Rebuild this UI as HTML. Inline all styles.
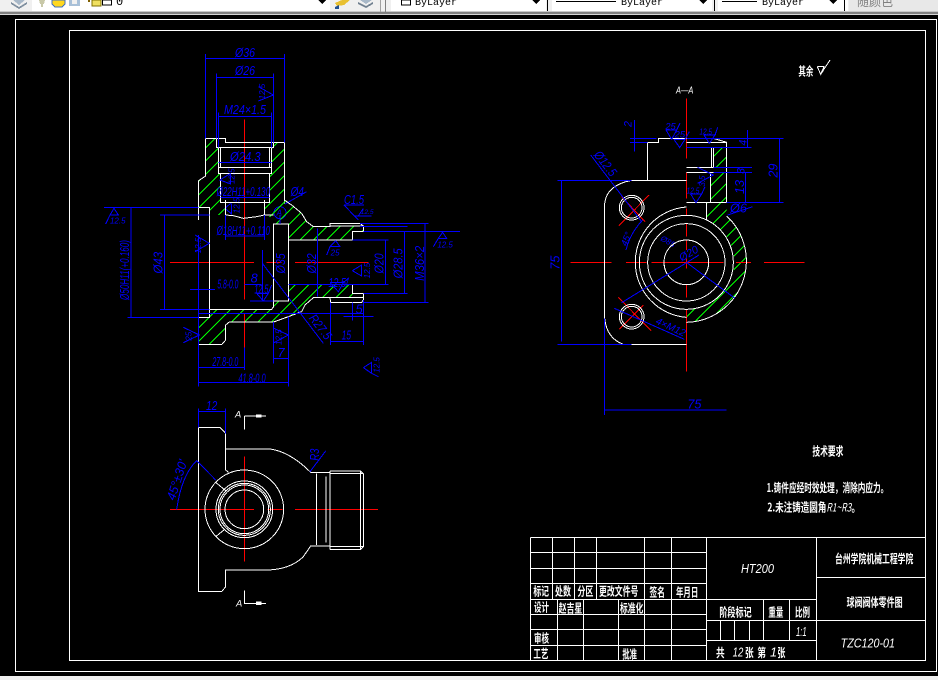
<!DOCTYPE html>
<html><head><meta charset="utf-8"><style>
html,body{margin:0;padding:0;width:938px;height:680px;overflow:hidden;background:#000}
svg{display:block;position:absolute;left:0;top:0}
text{font-family:"Liberation Sans","Noto Sans CJK SC",sans-serif}
.w{fill:none;stroke:#fff;stroke-width:3}
.b{fill:none;stroke:#00f;stroke-width:3}
.r{fill:none;stroke:#f00;stroke-width:3}
.t{fill:#00f;font-style:italic;font-size:38px}
.s{fill:#00f;font-style:italic;font-size:24px}
.c{fill:#fff;font-size:35px;font-family:"Noto Sans CJK SC","WenQuanYi Zen Hei",sans-serif;font-weight:700}
.i{fill:#fff;font-style:italic;font-size:38px}
.h{stroke:#0f0;stroke-width:3;fill:none}
.m{font-family:"Liberation Mono",monospace;font-size:10px;fill:#000}
</style></head><body>
<svg width="938" height="680" viewBox="0 0 938 680" xmlns="http://www.w3.org/2000/svg" shape-rendering="crispEdges">
<defs>
<path id="hh" d="M40 0L0 40M80 0L0 80M120 0L0 120M160 0L0 160M200 0L0 200M240 0L0 240M280 0L0 280M320 0L0 320M360 0L0 360M400 0L0 400M440 0L0 440M480 0L0 480M520 0L0 520M560 0L0 560M600 0L0 600M640 0L0 640M680 0L0 680M720 0L0 720M760 0L0 760M800 0L0 800M840 0L0 840M880 0L0 880M920 0L0 920M960 0L0 960M1000 0L0 1000M1040 0L0 1040M1080 0L0 1080M1120 0L0 1120M1160 0L0 1160M1200 0L0 1200M1240 0L0 1240M1280 0L0 1280M1320 0L0 1320M1360 0L0 1360M1400 0L0 1400M1440 0L0 1440"/>
<clipPath id="k1"><path d="M317 295H349V322H355V400H361V487H377V525H329V502H296V422L317 408Z"/></clipPath>
<clipPath id="k2"><path d="M553 307H520V322H515V400H509V487H493V525L520 535H560V490H553Z"/></clipPath>
<clipPath id="k3"><path d="M553 0L575 15L605 40L620 65L640 80H690V78H790V95H757V120H565V72H521L515 45H493V0Z"/></clipPath>
<clipPath id="k4"><path d="M565 253H757V280H790V293H640L615 315L605 335L565 350L521 366H388L377 375V420L365 434H296V352H329V328H515L521 320V303H565Z"/></clipPath>
<clipPath id="k5"><path d="M490 203H530V262H490ZM482 278H530V368H482ZM469 368H530V408A184 184 0 0 1 409 727V688A141 141 0 0 0 469 418Z"/></clipPath>
</defs>
<rect width="938" height="680" fill="#000"/>
<!-- toolbar -->
<rect width="938" height="11" fill="#f0f0f0"/>
<rect y="11" width="938" height="1" fill="#c8c8c8"/>
<rect y="12" width="938" height="2" fill="#808080"/>
<rect y="14" width="938" height="1" fill="#d8d8d8"/>
<rect x="32" y="0" width="298" height="11" fill="#fff"/>
<path d="M11 2L19 7L27 2L27 4L19 9L11 4Z" fill="#7f8f9f"/><path d="M13 0H25L19 5Z" fill="#a8b8c8"/>
<path d="M39 0H45L44 4H43V7H41V4H40Z" fill="#c8c8a8"/>
<path d="M52 0H65V4L62 7H55L52 4Z" fill="#ffd820" stroke="#4070c0"/>
<rect x="69" y="0" width="11" height="6" fill="#a8c0d8"/><rect x="72" y="0" width="5" height="4" fill="#f0f0f0"/>
<rect x="88" y="0" width="2" height="2" fill="#806000"/><rect x="92" y="0" width="9" height="6" fill="#f0e060" stroke="#807000"/>
<rect x="102.500" y="0" width="9" height="5" fill="#fff" stroke="#000"/>
<text x="116" y="5" class="m" style="font-size:12px">0</text>
<path d="M318 0H326L322 4Z" fill="#000"/>
<path d="M335 3L342 0H350L344 5L337 6Z" fill="#e8c030"/><path d="M335 7L339 5V9H335Z" fill="#205090"/>
<path d="M358 2L366 6L373 2V4L366 8L358 4Z" fill="#708090"/><path d="M360 0H372L366 4Z" fill="#a8b8c8"/>
<rect x="380" y="0" width="1" height="12" fill="#a0a0a0"/><rect x="385" y="0" width="1" height="12" fill="#808080"/>
<rect x="391" y="0" width="155" height="11" fill="#fff"/>
<rect x="401.500" y="0" width="9" height="5" fill="#fff" stroke="#000"/>
<text x="415" y="5" class="m">ByLayer</text><path d="M532 0H540L536 4Z" fill="#000"/>
<rect x="547" y="0" width="1" height="11" fill="#000"/>
<rect x="552" y="0" width="160" height="11" fill="#fff"/>
<rect x="556" y="1" width="60" height="1" fill="#000"/>
<text x="621" y="5" class="m">ByLayer</text><path d="M699 0H707L703 4Z" fill="#000"/>
<rect x="714" y="0" width="1" height="11" fill="#000"/>
<rect x="718" y="0" width="130" height="11" fill="#fff"/>
<rect x="722" y="1" width="35" height="1" fill="#000"/>
<text x="762" y="5" class="m">ByLayer</text><path d="M829 0H837L833 4Z" fill="#000"/>
<rect x="844" y="0" width="1" height="11" fill="#000"/>
<rect x="849" y="0" width="89" height="11" fill="#e8e8e8"/>
<text x="857" y="6" style="font-size:13px;fill:#808080" textLength="36" lengthAdjust="spacingAndGlyphs">随颜色</text>
<!-- bottom strip -->
<rect y="676" width="938" height="4" fill="#f0f0f0"/>
<!-- frames -->
<rect x="15.500" y="19.500" width="921" height="652" fill="none" stroke="#fff"/>
<rect x="69.500" y="30.500" width="856" height="630" fill="none" stroke="#fff"/>

<!-- main section, upper -->
<g transform="translate(100,40) scale(.33333)">
<g clip-path="url(#k1)"><use href="#hh" class="h"/></g>
<g clip-path="url(#k2)"><use href="#hh" class="h"/></g>
<path class="r" d="M433 238V540"/>
<path class="w" d="M296 540V422L317 408V295H377V307H553V490M349 295V322H520V307M355 322V400H515V322M355 382H515M361 322V382M509 322V382M361 400V487H509V400M377 487V540M493 487V525M296 502H329V540"/>
<path class="b" d="M317 42V295M553 42V307M317 55H553M349 100V295M520 100V307M349 112H520M355 218V322M514 218V322M355 229H514M355 367H514M361 473H509M12 502H296M180 525H296M475 140L520 165L475 183M392 400L360 420L392 432V400M392 490L375 505L395 522V490M555 492L620 455M732 495H792M732 495L775 540M765 528H815M775 528L790 505"/>
<circle class="b" cx="540" cy="518" r="18"/>
<text class="t" x="405" y="51" textLength="60" lengthAdjust="spacingAndGlyphs">Ø36</text>
<text class="t" x="405" y="105" textLength="60" lengthAdjust="spacingAndGlyphs">Ø26</text>
<text class="t" x="372" y="222" textLength="126" lengthAdjust="spacingAndGlyphs">M24×1.5</text>
<text class="t" x="390" y="363" textLength="92" lengthAdjust="spacingAndGlyphs">Ø24.3</text>
<text class="t" x="350" y="468" textLength="160" lengthAdjust="spacingAndGlyphs">Ø22H11+0.130</text>
<text class="t" x="572" y="468" textLength="40" lengthAdjust="spacingAndGlyphs">Ø4</text>
<text class="t" x="732" y="492" textLength="60" lengthAdjust="spacingAndGlyphs">C1.5</text>
<text class="s" x="530" y="527">A</text>
<text class="s" transform="translate(495,178) rotate(-90)">12.5</text>
<text class="s" transform="translate(404,432) rotate(-90)">12.5</text>
<text class="s" transform="translate(418,520) rotate(-90)">12.5</text>
<text class="s" x="782" y="522" style="font-size:20px">12.5</text>
</g>

<!-- main section, lower -->
<g transform="translate(100,200) scale(.33333)">
<g clip-path="url(#k3)"><use href="#hh" class="h"/></g>
<g clip-path="url(#k4)"><use href="#hh" class="h"/></g>
<path class="r" d="M433 0V298M433 342V442M210 187H462M500 187H545M585 187H806"/>
<path class="w" d="M296 0V22H329V328H515L521 320V72H565V120H757V95H790V78L780 70H690V80H640L620 65L605 40L575 15L553 0M690 78H790M521 303H565V72M565 253H757V280H790V300L785 307H692L690 293H640L615 315L605 335L565 350L521 366H388L377 375V420L365 434H296V352H329V328M690 293H790M377 0V45M493 0V45H520M377 45L400 47L430 55L470 50L493 45M360 7H493"/>
<path class="b" d="M12 22H296M93 22V352M82 352H296M180 45H329M193 45V328M180 328H329M30 45H55L42 25L30 45L17 72M377 45V120M493 45V120M377 108H493M296 340H790M730 349H820M757 307V362M692 307V435M790 300V435M692 424H790M270 268H345M296 105V560M296 503H433M296 548H565M565 350V560M433 443V510M521 366V490M521 476H565M433 253H485M487 150V300M450 303H521M470 280H505L490 303L470 280M505 280L515 255M487 190L670 430M652 85V290M757 120H865M565 253H865M857 120V253M780 80H922M790 280H922M913 95V280M790 95H1080M780 70H985M975 70V307M790 307H985M1015 115H1040L1028 97L1015 115L1000 140M690 140H720L707 122L690 140L680 165M285 105L328 130L285 155M250 382L298 405L250 428M522 385L565 405L522 428M790 503L815 487V520L790 503M815 520L835 530M757 212L785 195V228L757 212M690 248H730L715 275L690 248M730 248L745 235M540 45V72"/>
<text class="t" x="350" y="105" textLength="160" lengthAdjust="spacingAndGlyphs">Ø18H11+0.110</text>
<text class="t" x="352" y="266" textLength="63" lengthAdjust="spacingAndGlyphs">5.8-0.0</text>
<text class="t" x="452" y="248">8</text>
<text class="t" x="463" y="281" textLength="42" lengthAdjust="spacingAndGlyphs">12.5</text>
<text class="t" x="685" y="261" textLength="60" lengthAdjust="spacingAndGlyphs">12.5/</text>
<text class="s" x="692" y="166">25</text>
<text class="t" x="725" y="418" textLength="28" lengthAdjust="spacingAndGlyphs">15</text>
<text class="t" x="767" y="340">5</text>
<text class="t" x="533" y="471">7</text>
<text class="t" x="337" y="498" textLength="78" lengthAdjust="spacingAndGlyphs">27.8-0.0</text>
<text class="t" x="415" y="548" textLength="82" lengthAdjust="spacingAndGlyphs">41.8-0.0</text>
<text class="s" x="30" y="71">12.5</text>
<text class="s" x="1012" y="142">12.5</text>
<text class="t" transform="translate(87,210) rotate(-90)" text-anchor="middle" textLength="180" lengthAdjust="spacingAndGlyphs">Ø50H11(+0.160)</text>
<text class="t" transform="translate(187,188) rotate(-90)" text-anchor="middle" textLength="65" lengthAdjust="spacingAndGlyphs">Ø43</text>
<text class="t" transform="translate(555,190) rotate(-90)" text-anchor="middle" textLength="60" lengthAdjust="spacingAndGlyphs">Ø35</text>
<text class="t" transform="translate(648,190) rotate(-90)" text-anchor="middle" textLength="60" lengthAdjust="spacingAndGlyphs">Ø32</text>
<text class="t" transform="translate(850,190) rotate(-90)" text-anchor="middle" textLength="60" lengthAdjust="spacingAndGlyphs">Ø20</text>
<text class="t" transform="translate(908,190) rotate(-90)" text-anchor="middle" textLength="90" lengthAdjust="spacingAndGlyphs">Ø28.5</text>
<text class="t" transform="translate(972,190) rotate(-90)" text-anchor="middle" textLength="105" lengthAdjust="spacingAndGlyphs">M36×2</text>
<text class="t" transform="translate(625,355) rotate(52)" textLength="85" lengthAdjust="spacingAndGlyphs">R27.5</text>
<text class="s" transform="translate(303,160) rotate(-90)">12.5</text>
<text class="s" transform="translate(275,422) rotate(-90)">25</text>
<text class="s" transform="translate(545,435) rotate(-90)">12.5</text>
<text class="s" transform="translate(810,235) rotate(-90)">12.5</text>
<text class="s" transform="translate(838,518) rotate(-90)">12.5</text>
</g>

<!-- right view upper -->
<g transform="translate(550,80) scale(.33333)">
<g clip-path="url(#k5)"><use href="#hh" class="h"/></g>
<path class="r" d="M409 55V235M409 278V355M409 385V408M409 432V470M409 480V510M215 350L285 425M207 437L297 345"/>
<path class="w" d="M164 510V370Q170 315 245 301H409M292 301V188H326V175H490L530 187V368M409 187H530M409 203H490V262M484 203V262M409 262H490M409 278H490L482 278V368M409 368H530M469 368V418"/>
<circle class="w" cx="245" cy="383" r="37"/><circle class="w" cx="245" cy="383" r="31"/>
<path class="b" d="M240 175H320M409 175H700M240 188H292M253 120V215M22 301H245M35 301V510M593 150V203M409 203H605M490 262H606M490 278H606M586 278V368M688 175V368M530 368H700M533 405L608 380M122 225L275 425M278 420Q240 460 228 510M348 150H380L365 178L348 150M380 150L390 130M372 178H405L389 203L372 178M405 178L418 155M462 165H495L478 190L462 165M495 165L503 142M422 342H455L438 368L422 342M455 342L465 320M443 262L490 285L443 310"/>
<text class="i" x="378" y="40" textLength="52" lengthAdjust="spacingAndGlyphs" style="font-size:30px">A—A</text>
<text class="s" x="346" y="148" style="font-size:28px">25</text>
<text class="s" x="374" y="173" style="font-size:28px">25</text>
<text class="s" x="448" y="164" style="font-size:26px" textLength="38" lengthAdjust="spacingAndGlyphs">12.5</text>
<text class="s" x="410" y="341" style="font-size:26px" textLength="38" lengthAdjust="spacingAndGlyphs">12.5</text>
<text class="t" x="540" y="397">Ø6</text>
<text class="t" transform="translate(244,141) rotate(-90)" style="font-size:32px">2</text>
<text class="t" transform="translate(589,197) rotate(-90)" style="font-size:32px">4</text>
<text class="t" transform="translate(583,282) rotate(-90)" style="font-size:32px">3</text>
<text class="t" transform="translate(582,342) rotate(-90)">13</text>
<text class="t" transform="translate(682,293) rotate(-90)">29</text>
<text class="s" transform="translate(465,320) rotate(-90)">3.5</text>
<text class="t" transform="translate(130,225) rotate(52)" textLength="85" lengthAdjust="spacingAndGlyphs">Ø12.5</text>
<text class="s" transform="translate(230,500) rotate(-70)" style="font-size:28px">45°</text>
<text class="s" transform="translate(330,480) rotate(30)">Ø85</text>
</g>

<!-- right view lower -->
<g transform="translate(550,240) scale(.33333)">
<path class="r" d="M62 67H185M228 67H290M305 67H520M558 67H603M642 67H763M409 0V30M409 55V85M409 133V172M409 210V395M205 172L303 272M208 268L280 195"/>
<path class="w" d="M164 0V235Q170 295 220 313H409M409 232A166 166 0 0 1 409 -99"/>
<path class="w" d="M530 -72A184 184 0 0 1 409 247"/>
<circle class="w" cx="409" cy="67" r="67"/><circle class="w" cx="409" cy="67" r="116"/>
<circle class="w" cx="409" cy="67" r="141"/>
<circle class="w" cx="245" cy="230" r="37"/><circle class="w" cx="245" cy="230" r="31"/>
<path class="b" d="M35 0V305M22 313H245M164 235V525M164 510H530M215 188L447 45M409 67L555 175M193 205L403 298"/>
<text class="t" x="412" y="505">75</text>
<text class="t" transform="translate(29,68) rotate(-90)" text-anchor="middle">75</text>
<text class="t" x="395" y="65" transform="rotate(-30 395 65)" style="font-size:32px">Ø20</text>
<text class="t" transform="translate(315,250) rotate(25)" textLength="95" lengthAdjust="spacingAndGlyphs" style="font-size:30px">4×M12</text>
</g>

<!-- left view -->
<g transform="translate(150,395) scale(.33333)">
<path class="r" d="M60 343H312M352 343H397M435 343H684M283 185V500"/>
<path class="w" d="M145 97V590H215L227 575V525H345Q420 525 460 485L482 453H540M145 97H210L227 115V225L235 232M227 162H360Q420 170 482 232H540M540 228V463M632 228V463M540 228H632L640 236V455L632 463H540M540 236H640M540 455H640M500 236V450M528 245V442M197 262L227 287M197 425L222 405M283 63H348M283 63V103M283 587V625H348"/>
<path d="M318 58H335V68H318ZM318 620H335V630H318Z" fill="#fff"/>
<circle class="w" cx="283" cy="343" r="118"/><circle class="w" cx="283" cy="343" r="85"/><circle class="w" cx="283" cy="343" r="78"/><circle class="w" cx="283" cy="343" r="73"/><circle class="w" cx="283" cy="343" r="58"/>
<path class="b" d="M145 40V97M227 40V115M145 50H227M480 230L527 168M80 343Q95 240 140 197L197 255"/>
<text class="i" x="255" y="68" style="font-size:28px">A</text>
<text class="i" x="258" y="634" style="font-size:28px">A</text>
<text class="t" x="168" y="45" textLength="34" lengthAdjust="spacingAndGlyphs">12</text>
<text class="t" transform="translate(507,197) rotate(-90)" textLength="36" lengthAdjust="spacingAndGlyphs">R3</text>
<text class="t" transform="translate(74,318) rotate(-72)" textLength="125" lengthAdjust="spacingAndGlyphs">45°±30'</text>
</g>

<!-- title block left -->
<g transform="translate(525,530) scale(.33333)">
<path class="w" d="M16 22H1201M16 67H545M16 115H545M16 160H545M16 208H545M16 253H545M16 298H545M16 346H545M16 391H1201M16 22V391M83 22V208M148 22V208M214 22V208M358 22V391M439 22V391M545 22V391M98 208V391M175 208V391M280 208V391"/>
<text class="c" x="25" y="197" textLength="47" lengthAdjust="spacingAndGlyphs">标记</text>
<text class="c" x="90" y="197" textLength="48" lengthAdjust="spacingAndGlyphs">处数</text>
<text class="c" x="157" y="197" textLength="48" lengthAdjust="spacingAndGlyphs">分区</text>
<text class="c" x="222" y="197" textLength="118" lengthAdjust="spacingAndGlyphs">更改文件号</text>
<text class="c" x="373" y="200" textLength="47" lengthAdjust="spacingAndGlyphs">签名</text>
<text class="c" x="453" y="199" textLength="67" lengthAdjust="spacingAndGlyphs">年月日</text>
<text class="c" x="27" y="244" textLength="45" lengthAdjust="spacingAndGlyphs">设计</text>
<text class="c" x="101" y="247" textLength="71" lengthAdjust="spacingAndGlyphs">赵吉星</text>
<text class="c" x="285" y="247" textLength="70" lengthAdjust="spacingAndGlyphs">标准化</text>
<text class="c" x="27" y="337" textLength="45" lengthAdjust="spacingAndGlyphs">审核</text>
<text class="c" x="25" y="384" textLength="45" lengthAdjust="spacingAndGlyphs">工艺</text>
<text class="c" x="292" y="385" textLength="44" lengthAdjust="spacingAndGlyphs">批准</text>
</g>

<!-- title block right -->
<g transform="translate(700,530) scale(.33333)">
<path class="w" d="M676 22V391M350 22V391M350 142H676M350 271H676M19 208H350M19 271H350M19 331H350M190 208V331M268 208V331M61 271V331M103 271V331M148 271V331"/>
<text class="c" x="405" y="99" textLength="235" lengthAdjust="spacingAndGlyphs">台州学院机械工程学院</text>
<text class="c" x="440" y="229" textLength="168" lengthAdjust="spacingAndGlyphs">球阀阀体零件图</text>
<text class="i" x="123" y="129" textLength="99" lengthAdjust="spacingAndGlyphs">HT200</text>
<text class="i" x="422" y="353" textLength="163" lengthAdjust="spacingAndGlyphs">TZC120-01</text>
<text class="c" x="58" y="260" textLength="97" lengthAdjust="spacingAndGlyphs">阶段标记</text>
<text class="c" x="205" y="260" textLength="45" lengthAdjust="spacingAndGlyphs">重量</text>
<text class="c" x="285" y="260" textLength="45" lengthAdjust="spacingAndGlyphs">比例</text>
<text class="i" x="288" y="318" textLength="32" lengthAdjust="spacingAndGlyphs">1:1</text>
<text class="c" x="48" y="381" textLength="26" lengthAdjust="spacingAndGlyphs">共</text>
<text class="i" x="98" y="380" textLength="32" lengthAdjust="spacingAndGlyphs">12</text>
<text class="c" x="135" y="381" textLength="26" lengthAdjust="spacingAndGlyphs">张</text>
<text class="c" x="172" y="381" textLength="26" lengthAdjust="spacingAndGlyphs">第</text>
<text class="i" x="210" y="380">1</text>
<text class="c" x="232" y="381" textLength="24" lengthAdjust="spacingAndGlyphs">张</text>
</g>

<!-- tech requirements -->
<g transform="translate(750,435) scale(.33333)">
<text class="c" x="187" y="62" textLength="93" lengthAdjust="spacingAndGlyphs">技术要求</text>
<text class="c" x="50" y="171" textLength="365" lengthAdjust="spacingAndGlyphs">1.铸件应经时效处理，消除内应力。</text>
<text class="c" x="52" y="229" textLength="278" lengthAdjust="spacingAndGlyphs">2.未注铸造圆角<tspan font-style="italic" font-weight="400">R1~R3</tspan>。</text>
</g>

<!-- note -->
<g transform="translate(770,50) scale(.33333)">
<text class="c" x="85" y="77" textLength="45" lengthAdjust="spacingAndGlyphs">其余</text>
<path class="w" d="M142 50H162L152 73L142 50M152 73L180 30"/>
</g>
</svg>
</body></html>
